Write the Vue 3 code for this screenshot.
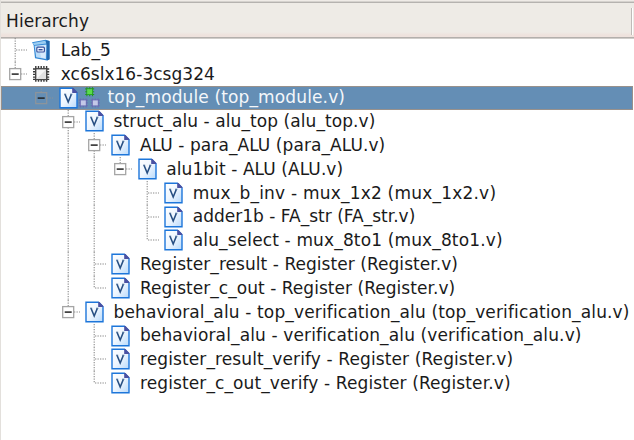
<script setup>
// guides: one mark per indent column
// . empty   | line through   t tee   l last child   m box, line above and below   e box, line above
const rows = [
  { guides: 't', icon: 'project', text: 'Lab_5', track: 0 },
  { guides: 'e', icon: 'chip', text: 'xc6slx16-3csg324', track: 0.03 },
  { guides: '.e', icon: 'verilog', top: true, text: 'top_module (top_module.v)', track: 0.13 },
  { guides: '..m', icon: 'verilog', text: 'struct_alu - alu_top (alu_top.v)', track: 0.08 },
  { guides: '..|m', icon: 'verilog', text: 'ALU - para_ALU (para_ALU.v)', track: 0.07 },
  { guides: '..||e', icon: 'verilog', text: 'alu1bit - ALU (ALU.v)', track: 0.07 },
  { guides: '..||.t', icon: 'verilog', text: 'mux_b_inv - mux_1x2 (mux_1x2.v)', track: 0.21 },
  { guides: '..||.t', icon: 'verilog', text: 'adder1b - FA_str (FA_str.v)', track: 0.01 },
  { guides: '..||.l', icon: 'verilog', text: 'alu_select - mux_8to1 (mux_8to1.v)', track: 0.14 },
  { guides: '..|t', icon: 'verilog', text: 'Register_result - Register (Register.v)', track: 0.05 },
  { guides: '..|l', icon: 'verilog', text: 'Register_c_out - Register (Register.v)', track: 0.04 },
  { guides: '..e', icon: 'verilog', text: 'behavioral_alu - top_verification_alu (top_verification_alu.v)', track: 0.14 },
  { guides: '...t', icon: 'verilog', text: 'behavioral_alu - verification_alu (verification_alu.v)', track: 0.13 },
  { guides: '...t', icon: 'verilog', text: 'register_result_verify - Register (Register.v)', track: 0.11 },
  { guides: '...l', icon: 'verilog', text: 'register_c_out_verify - Register (Register.v)', track: 0.11 },
]
const isBox = (g) => g === 'm' || g === 'e'
</script>

<template>
  <div class="panel">
    <header class="head"><span class="title">Hierarchy</span><i class="divider"></i></header>
    <main class="tree">
      <div v-for="(r, i) in rows" :key="i" class="row" :class="{ selected: r.top }">
        <svg v-for="(g, k) in r.guides" :key="k" class="guide" viewBox="0 0 26.4 23.8">
          <g class="dots">
            <path v-if="g === '|' || g === 't' || g === 'm'" d="M13.2 0V23.8" />
            <path v-if="g === 'l' || g === 'e'" d="M13.2 0V12.5" />
            <path v-if="g !== '|' && g !== '.'" d="M14 12H25" />
          </g>
          <g v-if="isBox(g)">
            <rect class="box" x="7.7" y="6.6" width="11" height="11" />
            <path class="minus" d="M9.7 12.1H16.7" />
          </g>
        </svg>

        <svg v-if="r.icon === 'project'" class="icon" viewBox="0 0 19 22">
          <path d="M0 3.2 13.6 .7 17.5 2V20L15 21.5 3 19.3 1.6 6Z" fill="#3187d4" />
          <path d="M14 1.5 17.5 2V20.5L15 21.5Z" fill="#2268ae" />
          <path d="M.8 4 13.2 1.8 14.4 4.6 2.2 6.1Z" fill="#9bcdf2" />
          <path d="M2.6 6.8 14.5 5.5 14 20 4.2 18.2Z" fill="#b9dcf9" />
          <path d="M7 7 14 6 13.4 19.4 9 18.4Z" fill="#d8ecfd" />
          <rect x="4.8" y="8.2" width="7.6" height="4.8" rx="1" fill="#f3f7ff" stroke="#37529d" stroke-width="1.2" />
          <path d="M6.6 10.7H10.6" stroke="#354f96" stroke-width="1.4" />
        </svg>
        <svg v-else-if="r.icon === 'chip'" class="icon" viewBox="0 0 19 22">
          <path d="M1 6H17.2M1 8.7H17.2M1 11.4H17.2M1 14.1H17.2M1 16.4H17.2M3.8 3V18.8M6.5 3V18.8M9.2 3V18.8M11.9 3V18.8M14.6 3V18.8" stroke="#383838" stroke-width="1.4" />
          <rect x="3.2" y="5.2" width="12" height="12" fill="#4a4a4a" />
          <rect x="4.4" y="6.4" width="9.6" height="9.6" fill="#f6f6f6" />
          <path d="M4.4 16 14 6.4V16Z" fill="#e2e2e2" />
        </svg>
        <svg v-else class="icon" viewBox="0 0 19 22">
          <defs>
            <linearGradient :id="'page' + i" x1="0" y1="0" x2="1" y2="1">
              <stop offset="0" stop-color="#fff" />
              <stop offset=".5" stop-color="#eef6ff" />
              <stop offset="1" stop-color="#b8d9fa" />
            </linearGradient>
          </defs>
          <path d="M1 1.2H13.5L18 5.7V20.8H1Z" :fill="`url(#page${i})`" stroke="#1d76da" stroke-width="1.4" />
          <path d="M13.2 1H14.5L18.3 5V6H13.2Z" fill="#4a51a2" />
          <path d="M6 7.2 9.2 15 12.4 7.2" fill="none" stroke="#274f83" stroke-width="1.6" />
          <path d="M5 7.2H7.2M11.2 7.2H13.4" stroke="#4a6d98" stroke-width="1" />
        </svg>

        <svg v-if="r.top" class="modules" viewBox="0 0 23 23">
          <g v-for="(p, n) in [[7.2, 1.2, '#22991e', '#5bdc4b'], [0.8, 12.4, '#6a6ab3', '#c4c8e8'], [12.8, 12.4, '#6a6ab3', '#c4c8e8']]" :key="n" :transform="`translate(${p[0]} ${p[1]})`">
            <path d="M0 1.7H9M0 4.5H9M0 7.3H9M1.7 0V9M4.5 0V9M7.3 0V9" :stroke="p[2]" stroke-width="1.1" />
            <rect x="2" y="2" width="5" height="5" :fill="p[3]" />
          </g>
        </svg>
        <span class="label" :style="{ letterSpacing: r.track + 'px' }">{{ r.text }}</span>
      </div>
    </main>
  </div>
</template>

<style>
body { background: #fff; }
</style>

<style scoped>
.panel {
  width: 634px;
  height: 440px;
  overflow: hidden;
  box-sizing: border-box;
  border-left: 1px solid #e3e0dc;
  background: #fff;
  color: #1a1a1a;
  font-family: "DejaVu Sans", sans-serif;
  font-size: 17px;
}
.head {
  height: 39px;
  box-sizing: border-box;
  display: flex;
  align-items: center;
  justify-content: space-between;
  border-bottom: 1px solid #d0cdca;
  background: linear-gradient(#efebe7 0 1px, #d5d2ce 1px 2px, #b5b2af 2px 3px, #eeebe6 3px 32px, #eee2dd 35px 37px, #b3afac 37px 38px);
  padding: 4px 0 0 5px;
}
.title { line-height: 30px; letter-spacing: .1px; }
.divider {
  width: 1px;
  height: 27px;
  border-left: 1px solid #bfbbb8;
  background: #fff;
  margin: 0 1px 0 0;
}
.row {
  height: 23.8px;
  display: flex;
  align-items: center;
  padding-left: .8px;
  white-space: pre;
}
.tree { margin-top: -.9px; }
.guide { width: 26.4px; height: 23.8px; flex: none; }
.dots path { fill: none; stroke: #8a8a8a; stroke-width: 1.1; stroke-dasharray: 1.3 1.2; }
.box { fill: #fff; stroke: #a5a5a5; stroke-width: 1.3; }
.minus { stroke: #222; stroke-width: 1.5; }
.icon { width: 19px; height: 22px; flex: none; margin-left: 4px; }
.modules { width: 23px; height: 23px; flex: none; }
.label { line-height: 23.8px; margin-left: 9.6px; padding-top: 1.4px; }
.selected {
  background: #648eb5;
  color: #f4f7fa;
  outline: 1px solid #98918c;
  outline-offset: -1px;
  margin-right: 1px;
}
.selected .label { margin-left: 7px; }
.selected .box { fill: #648eb5; stroke: #8c949b; }
.selected .dots path { stroke: #8b9299; }
</style>
